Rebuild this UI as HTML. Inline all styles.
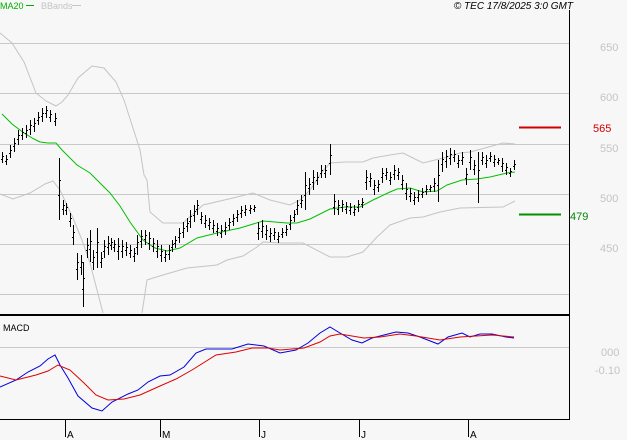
<!DOCTYPE html>
<html><head><meta charset="utf-8"><style>
html,body{margin:0;padding:0;background:#f7f7f7;}
svg{display:block;font-family:"Liberation Sans",sans-serif;}
</style></head><body>
<svg id="c" width="627" height="440" viewBox="0 0 627 440" xmlns="http://www.w3.org/2000/svg">
<rect width="627" height="440" fill="#f7f7f7"/>
<g stroke="#c8c8c8" stroke-width="1">
<line x1="0" y1="43.5" x2="569" y2="43.5"/><line x1="0" y1="93.5" x2="569" y2="93.5"/>
<line x1="0" y1="144.5" x2="569" y2="144.5"/><line x1="0" y1="194.5" x2="569" y2="194.5"/>
<line x1="0" y1="244.5" x2="569" y2="244.5"/><line x1="0" y1="294.5" x2="569" y2="294.5"/>
<line x1="0" y1="347.5" x2="569" y2="347.5"/>
</g>
<g fill="none" stroke="#c4c4c4" stroke-width="1">
<polyline points="0,33 12,43 24,62 36,93 46,101 56,106 62,102 68,95 78,78 92,66 104,68 116,82 124,100 132,125 140,150 144,175 147,180 150,212 163,223 183,223 203,205 233,198 253,193 270,200 290,205 300,200 310,190 322,172 330,163 345,162 363,162 373,158 390,155 403,153 413,158 423,163 435,160 447,157 460,153 470,152 485,148 503,143 515,144"/>
<polyline points="0,194 13,199 30,193 45,184 53,181 60,190 73,218 82,240 90,263 97,290 103,313"/>
<polyline points="142,313 147,280 150,279 163,275 187,268 217,265 227,260 243,256 257,247 263,242 280,243 303,243 330,257 347,257 363,252 377,237 390,225 410,218 423,217 440,212 460,208 503,207 515,201"/>
</g>
<polyline fill="none" stroke="#00c000" stroke-width="1" points="2,114 12,124 24,133 34,139 40,142 48,143 56,143 62,150 77,165 90,173 100,183 110,193 120,206 130,222 143,240 155,248 167,251 180,248 197,238 217,233 240,228 263,221 287,223 297,223 310,219 330,209 345,207 360,207 373,200 390,192 397,189 410,188 423,192 437,191 447,185 462,180 477,179 490,177 507,173 515,172"/>
<g id="bars" stroke="#000" stroke-width="1" fill="none"></g>
<line x1="519" y1="127.5" x2="561" y2="127.5" stroke="#d00000" stroke-width="2"/>
<line x1="519" y1="214.5" x2="561" y2="214.5" stroke="#009000" stroke-width="2"/>
<polyline fill="none" stroke="#0000e0" stroke-width="1" points="0,387 16,380 28,372 40,366 48,359 55,355 60,365 68,378 78,396 92,408 102,411 112,402 128,394 138,390 148,382 160,376 170,375 184,367 196,353 206,349 232,349 248,344 264,346 280,353 296,350 308,343 320,333 330,327 340,333 352,340 362,343 372,338 384,335 396,332 408,333 420,337 438,344 448,337 462,333 470,337 480,334 492,334 506,337 514,338"/>
<polyline fill="none" stroke="#e00000" stroke-width="1" points="0,376 16,380 36,375 48,371 58,365 70,370 84,383 96,395 108,400 124,399 140,395 160,386 176,379 192,370 216,355 236,352 252,348 268,348 280,350 304,348 320,342 330,336 340,334 364,338 380,337 400,334 416,336 440,340 460,337 492,335 514,337"/>
<line x1="0" y1="315" x2="569" y2="315" stroke="#000" stroke-width="2"/>
<line x1="569.5" y1="10" x2="569.5" y2="420" stroke="#000"/>
<line x1="0" y1="419.5" x2="570" y2="419.5" stroke="#000"/>
<g stroke="#000"><line x1="65.5" y1="419" x2="65.5" y2="437"/><line x1="160.5" y1="419" x2="160.5" y2="437"/><line x1="259.5" y1="419" x2="259.5" y2="437"/><line x1="359.5" y1="419" x2="359.5" y2="437"/><line x1="468.5" y1="419" x2="468.5" y2="437"/></g>
<g font-size="10" fill="#000"><text x="67" y="438">A</text><text x="162" y="438">M</text><text x="261" y="438">J</text><text x="361" y="438">J</text><text x="470" y="438">A</text></g>
<text x="3" y="331" font-size="9" fill="#000">MACD</text>
<text x="0" y="9" font-size="9" fill="#00b000">MA20</text><line x1="26" y1="5.5" x2="34" y2="5.5" stroke="#00b000"/>
<text x="41" y="9" font-size="9" fill="#c4c4c4">BBands</text><line x1="72" y1="5.5" x2="81" y2="5.5" stroke="#c4c4c4"/>
<text x="573" y="9" font-size="10" font-style="italic" fill="#000" text-anchor="end">© TEC 17/8/2025 3:0 GMT</text>
<g font-size="11" fill="#c4c4c4"><text x="600" y="51">650</text><text x="600" y="101">600</text><text x="600" y="152">550</text><text x="600" y="202">500</text><text x="600" y="252">450</text><text x="601" y="356">000</text><text x="595" y="374">-0.10</text></g>
<text x="593" y="132" font-size="11" fill="#d00000">565</text>
<text x="570" y="220" font-size="11" fill="#008800">479</text>
</svg>
<script>
var b=[[2,152,163],[6,155,165],[10,145,158],[14,138,152],[18,130,145],[22,128,140],[26,125,138],[30,120,135],[34,118,132],[38,112,125],[42,108,122],[46,106,118],[50,110,122],[55,113,126],[59,158,220],[63,200,215],[66,203,215],[70,213,227],[73,225,245],[77,253,280],[81,255,275],[83,262,307],[87,238,258],[90,230,262],[93,250,270],[97,228,268],[101,252,268],[104,240,258],[108,236,255],[111,238,250],[114,240,252],[118,238,260],[122,240,258],[126,242,256],[130,245,258],[134,248,262],[137,235,255],[141,230,248],[145,230,245],[149,232,250],[153,238,252],[157,240,258],[161,245,262],[165,250,262],[169,245,260],[172,240,252],[175,236,248],[179,228,243],[183,222,238],[187,218,232],[190,210,228],[194,205,222],[197,200,215],[201,212,224],[205,215,228],[209,218,230],[213,220,233],[217,223,236],[221,225,238],[225,222,235],[229,218,230],[233,214,226],[237,210,222],[241,206,218],[245,205,216],[250,205,214],[254,205,212],[258,222,240],[262,220,238],[266,225,240],[270,228,242],[274,228,240],[278,232,243],[282,228,238],[286,225,236],[290,215,230],[294,210,222],[297,200,215],[301,195,208],[305,172,210],[309,178,195],[313,170,190],[317,172,185],[321,165,178],[325,165,178],[330,144,175],[334,194,215],[338,200,215],[342,200,212],[346,202,214],[350,203,215],[354,205,216],[358,200,212],[362,198,208],[366,170,190],[370,173,187],[374,180,195],[378,180,192],[382,168,183],[386,168,180],[390,172,185],[394,165,180],[398,168,180],[402,175,190],[406,183,200],[410,188,202],[414,192,205],[418,190,202],[422,188,198],[426,185,195],[430,185,192],[434,178,192],[438,160,202],[442,152,172],[446,150,168],[450,148,165],[454,150,162],[458,155,168],[462,152,165],[466,168,185],[470,150,170],[474,160,175],[478,152,203],[482,152,165],[486,155,168],[490,152,162],[494,155,167],[498,158,165],[502,158,172],[506,163,175],[510,168,177],[514,160,170]];
var d="";for(var i=0;i<b.length;i++){var x=b[i][0]+0.5,h=b[i][1],l=b[i][2],o=Math.round(h+(l-h)*0.6)+0.5,c=Math.round(h+(l-h)*0.35)+0.5;d+="M"+x+" "+h+"V"+l+"M"+(x-1.5)+" "+o+"H"+x+"M"+x+" "+c+"H"+(x+1.5);}
var p=document.createElementNS("http://www.w3.org/2000/svg","path");p.setAttribute("d",d);document.getElementById("bars").appendChild(p);
</script>
</body></html>
